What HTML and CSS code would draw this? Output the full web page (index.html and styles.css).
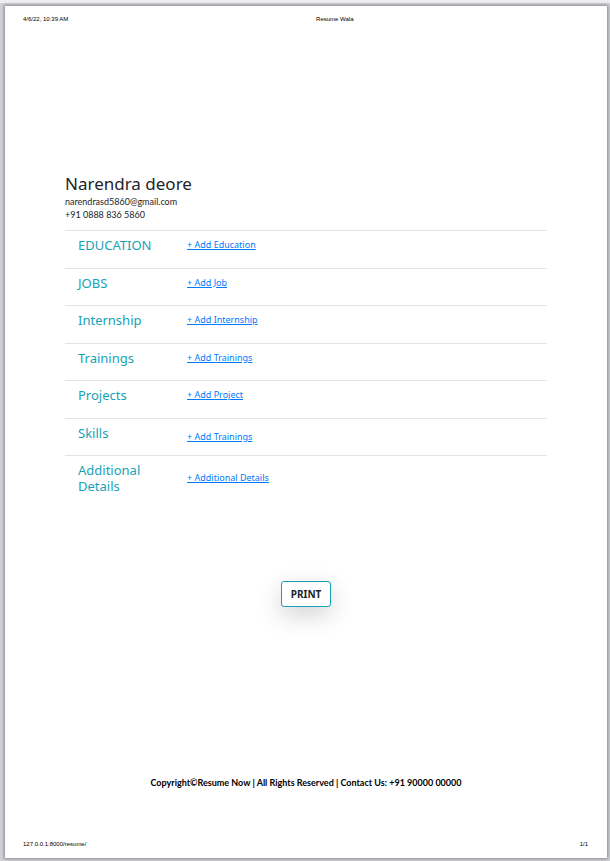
FILE: index.html
```
<!DOCTYPE html>
<html lang="en">
<head>
<meta charset="utf-8">
<meta name="viewport" content="width=device-width, initial-scale=1">
<title>Resume Wala</title>
<link rel="stylesheet" href="styles.css">
</head>
<body>
<div class="page">
  <header class="page-strip">
    <span>4/6/22, 10:39 AM</span>
    <span>Resume Wala</span>
    <span></span>
  </header>
  <main class="resume">
    <h1 class="name">Narendra deore</h1>
    <p class="contact">narendrasd5860@gmail.com</p>
    <p class="contact">+91 0888 836 5860</p>
    <div class="sections">
      <section class="row"><h2 class="title">EDUCATION</h2><a class="add" href="#">+ Add Education</a></section>
      <section class="row"><h2 class="title">JOBS</h2><a class="add" href="#">+ Add Job</a></section>
      <section class="row"><h2 class="title">Internship</h2><a class="add" href="#">+ Add Internship</a></section>
      <section class="row"><h2 class="title">Trainings</h2><a class="add" href="#">+ Add Trainings</a></section>
      <section class="row"><h2 class="title">Projects</h2><a class="add" href="#">+ Add Project</a></section>
      <section class="row row-middle"><h2 class="title">Skills</h2><a class="add" href="#">+ Add Trainings</a></section>
      <section class="row row-middle"><h2 class="title">Additional Details</h2><a class="add" href="#">+ Additional Details</a></section>
    </div>
    <button class="print" type="button">PRINT</button>
  </main>
  <p class="copyright">Copyright©Resume Now | All Rights Reserved | Contact Us: +91 90000 00000</p>
  <footer class="page-strip">
    <span>127.0.0.1:8000/resume/</span>
    <span></span>
    <span>1/1</span>
  </footer>
</div>
</body>
</html>
```
FILE: styles.css
```
* {
  box-sizing: border-box;
}

body {
  margin: 0;
  min-height: 100vh;
  display: flex;
  padding: 6px 3px 3px 5px;
  background: linear-gradient(#eeeef2 3px, #d2d3d8 3px);
  font-family: "Noto Sans", "Open Sans", sans-serif;
  color: #212529;
}

h1,
h2,
p {
  margin: 0;
  font-weight: 400;
}

.page {
  flex: 1;
  display: flex;
  flex-direction: column;
  background: #fff;
  box-shadow: 0 0 3px 1px #85868a;
}

.page-strip {
  display: grid;
  grid-template-columns: 5fr auto 4fr;
  padding: 9px 19px 10px 18px;
  font: 6px/8px "Liberation Sans", Arial, sans-serif;
  color: #000;
}

.page-strip span:last-child {
  text-align: right;
}

.resume {
  flex: 1;
  display: flex;
  flex-direction: column;
  padding: 140px 60px 0;
}

.name {
  font-size: 17px;
  line-height: 22px;
}

.contact {
  font-family: Lato, "Noto Sans", sans-serif;
  font-size: 9px;
  line-height: 13px;
}

.sections {
  margin-top: 9px;
}

.row {
  display: grid;
  grid-template-columns: 76px 1fr;
  column-gap: 33px;
  align-items: start;
  justify-items: start;
  min-height: 37px;
  padding: 6px 13px;
  border-top: 1px solid #e3e4e5;
}

.row:nth-child(odd) {
  min-height: 38px;
}

.title {
  font-size: 13px;
  line-height: 16px;
  color: #17a2b8;
}

.add {
  font-size: 9px;
  line-height: 16px;
  color: #007bff;
  text-decoration: underline;
}

.row-middle .add {
  align-self: center;
}

.print {
  align-self: center;
  margin-top: 81px;
  padding: 5px 9px;
  border: 1px solid #17a2b8;
  border-radius: 3px;
  background: #fff;
  box-shadow: 0 8px 24px rgba(0, 0, 0, 0.18);
  font: 700 10px/14px "Noto Sans", "Open Sans", sans-serif;
  color: #212529;
}

.copyright {
  padding: 0 18px 41px;
  text-align: center;
  font-family: Lato, "Noto Sans", sans-serif;
  font-size: 9px;
  font-weight: 700;
  line-height: 14px;
  color: #000;
}
```
